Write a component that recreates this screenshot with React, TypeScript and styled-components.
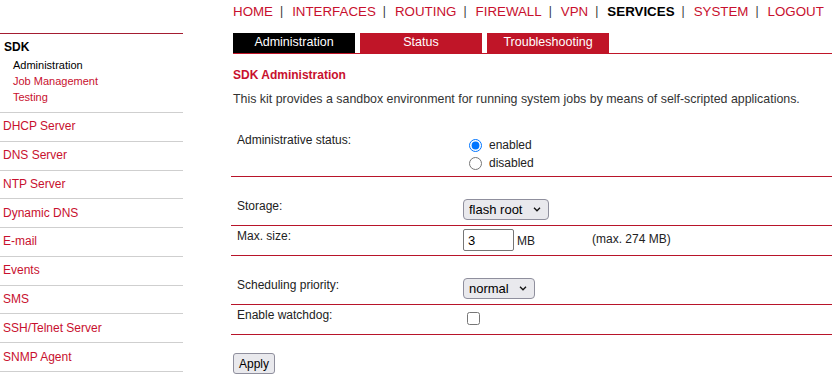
import React from 'react';
import styled, { createGlobalStyle } from 'styled-components';

const RED = '#c8102e';
const TAB_RED = '#c01528';
const LINE_RED = '#b8142a';

const GlobalStyle = createGlobalStyle`
  html, body { margin: 0; padding: 0; background: #fff; overflow: hidden; }
  body {
    font-family: "Liberation Sans", Arial, sans-serif;
    font-size: 12px;
    color: #222;
  }
`;

const Page = styled.div`
  display: grid;
  grid-template-columns: 183px 1fr;
  grid-template-rows: 33px auto;
  column-gap: 50px;
  width: 832px;
`;

const TopNav = styled.nav`
  grid-column: 2;
  grid-row: 1;
  display: flex;
  align-items: center;
  height: 22px;
  font-size: 13.33px;
`;

const NavLink = styled.a<{ $active?: boolean }>`
  color: ${p => (p.$active ? '#000' : RED)};
  font-weight: ${p => (p.$active ? 'bold' : 'normal')};
  text-decoration: none;
  white-space: nowrap;
`;

const NavSep = styled.span`
  color: #333;
  font-size: 12px;
  padding: 0 9px 0 7px;
`;

const Sidebar = styled.aside`
  grid-column: 1;
  grid-row: 2;
  border-top: 1px solid #a41d31;
`;

const Group = styled.div`
  padding: 6px 0 7px;
  border-bottom: 1px solid #cfcfcf;
`;

const GroupTitle = styled.div`
  font-weight: bold;
  font-size: 12px;
  line-height: 14px;
  padding-left: 4px;
  color: #000;
  margin-bottom: 3px;
`;

const SubLink = styled.a<{ $active?: boolean }>`
  display: block;
  font-size: 11px;
  line-height: 16px;
  padding-left: 13px;
  color: ${p => (p.$active ? '#000' : RED)};
  text-decoration: none;
`;

const SideItem = styled.a`
  display: flex;
  align-items: center;
  height: 28.78px;
  box-sizing: border-box;
  border-bottom: 1px solid #cfcfcf;
  padding: 0 0 1px 3px;
  font-size: 12px;
  color: ${RED};
  text-decoration: none;
`;

const Main = styled.main`
  grid-column: 2;
  grid-row: 2;
`;

const TabBar = styled.div`
  display: flex;
  gap: 5px;
  border-bottom: 1px solid ${TAB_RED};
`;

const Tab = styled.a<{ $active?: boolean }>`
  width: 122px;
  height: 20px;
  box-sizing: border-box;
  padding-bottom: 2px;
  display: flex;
  align-items: center;
  justify-content: center;
  background: ${p => (p.$active ? '#000' : TAB_RED)};
  color: #fff;
  font-size: 12.5px;
  text-decoration: none;
`;

const Heading = styled.h1`
  margin: 14px 0 0;
  font-size: 12px;
  line-height: 14px;
  font-weight: bold;
  color: ${RED};
`;

const Description = styled.p`
  margin: 10px 0 0;
  font-size: 12.4px;
  line-height: 14px;
  color: #333;
`;

const Form = styled.form`
  margin: 5px 0 0 -2px;
`;

const Row = styled.div<{ $spaced?: boolean }>`
  display: grid;
  grid-template-columns: 232px 1fr;
  border-bottom: 1px solid ${LINE_RED};
  padding: ${p => (p.$spaced ? '22px' : '3px')} 0 4px;
`;

const Label = styled.div`
  padding-left: 6px;
  font-size: 12px;
  line-height: 14px;
  color: #222;
`;

const Value = styled.div`
  display: flex;
  align-items: flex-start;
  min-height: 22px;
  font-size: 12px;
  color: #222;
`;

const RadioGroup = styled.div`
  display: flex;
  flex-direction: column;
  padding-top: 3px;
`;

const RadioOption = styled.label`
  display: flex;
  align-items: center;
  height: 18px;
  font-size: 12px;
  color: #222;
`;

const Radio = styled.input`
  margin: 0 7px 0 6px;
  width: 13px;
  height: 13px;
`;

const SelectWrap = styled.div`
  position: relative;
  display: inline-flex;
`;

const Select = styled.select`
  appearance: none;
  -webkit-appearance: none;
  height: 21px;
  box-sizing: border-box;
  padding: 0 25px 0 5px;
  font-family: "Liberation Sans", Arial, sans-serif;
  font-size: 13px;
  color: #000;
  background: #e9e9ed;
  border: 1px solid #8f8f9d;
  border-radius: 4px;
  outline: none;
`;

const Chevron = styled.svg`
  position: absolute;
  right: 8px;
  top: 8px;
  width: 8px;
  height: 5px;
  pointer-events: none;
`;

const SizeGrid = styled.div`
  display: grid;
  grid-template-columns: 129px auto;
  align-items: center;
  height: 22px;
`;

const SizeGroup = styled.div`
  display: flex;
  align-items: center;
`;

const TextInput = styled.input`
  width: 51px;
  height: 22px;
  box-sizing: border-box;
  margin: 0;
  padding: 0 4px;
  font-family: "Liberation Sans", Arial, sans-serif;
  font-size: 13px;
  color: #000;
  border: 1px solid #767676;
  border-radius: 2px;
`;

const Unit = styled.span`
  margin-left: 3px;
  font-size: 12px;
  padding-top: 2px;
`;

const Note = styled.span`
  font-size: 12px;
  padding-bottom: 2px;
`;

const Checkbox = styled.input`
  margin: 4px 0 0 4px;
  width: 13px;
  height: 13px;
`;

const ApplyButton = styled.button`
  margin: 18px 0 0 2px;
  height: 21px;
  padding: 0 5px;
  font-family: "Liberation Sans", Arial, sans-serif;
  font-size: 12px;
  color: #000;
  background: #e9e9ed;
  border: 1px solid #8f8f9d;
  border-radius: 3px;
`;

const navItems = ['HOME', 'INTERFACES', 'ROUTING', 'FIREWALL', 'VPN', 'SERVICES', 'SYSTEM', 'LOGOUT'];
const sideItems = ['DHCP Server', 'DNS Server', 'NTP Server', 'Dynamic DNS', 'E-mail', 'Events', 'SMS', 'SSH/Telnet Server', 'SNMP Agent'];

const ChevronIcon = () => (
  <Chevron viewBox="0 0 8 5">
    <polyline points="1,0.8 4,3.8 7,0.8" fill="none" stroke="#111" strokeWidth="1.3" />
  </Chevron>
);

export default function App() {
  return (
    <>
      <GlobalStyle />
      <Page>
        <TopNav>
          {navItems.map((item, i) => (
            <React.Fragment key={item}>
              <NavLink href="#" $active={item === 'SERVICES'}>{item}</NavLink>
              {i < navItems.length - 1 && <NavSep>|</NavSep>}
            </React.Fragment>
          ))}
        </TopNav>

        <Sidebar>
          <Group>
            <GroupTitle>SDK</GroupTitle>
            <SubLink href="#" $active>Administration</SubLink>
            <SubLink href="#">Job Management</SubLink>
            <SubLink href="#">Testing</SubLink>
          </Group>
          {sideItems.map(item => (
            <SideItem href="#" key={item}>{item}</SideItem>
          ))}
        </Sidebar>

        <Main>
          <TabBar>
            <Tab href="#" $active>Administration</Tab>
            <Tab href="#">Status</Tab>
            <Tab href="#">Troubleshooting</Tab>
          </TabBar>
          <Heading>SDK Administration</Heading>
          <Description>
            This kit provides a sandbox environment for running system jobs by means of self-scripted applications.
          </Description>

          <Form onSubmit={e => e.preventDefault()}>
            <Row $spaced>
              <Label>Administrative status:</Label>
              <Value>
                <RadioGroup>
                  <RadioOption>
                    <Radio type="radio" name="status" defaultChecked />
                    enabled
                  </RadioOption>
                  <RadioOption>
                    <Radio type="radio" name="status" />
                    disabled
                  </RadioOption>
                </RadioGroup>
              </Value>
            </Row>
            <Row $spaced>
              <Label>Storage:</Label>
              <Value>
                <SelectWrap>
                  <Select defaultValue="flash">
                    <option value="flash">flash root</option>
                  </Select>
                  <ChevronIcon />
                </SelectWrap>
              </Value>
            </Row>
            <Row>
              <Label>Max. size:</Label>
              <Value>
                <SizeGrid>
                  <SizeGroup>
                    <TextInput type="text" defaultValue="3" />
                    <Unit>MB</Unit>
                  </SizeGroup>
                  <Note>(max. 274 MB)</Note>
                </SizeGrid>
              </Value>
            </Row>
            <Row $spaced>
              <Label>Scheduling priority:</Label>
              <Value>
                <SelectWrap>
                  <Select defaultValue="normal">
                    <option value="normal">normal</option>
                  </Select>
                  <ChevronIcon />
                </SelectWrap>
              </Value>
            </Row>
            <Row>
              <Label>Enable watchdog:</Label>
              <Value>
                <Checkbox type="checkbox" />
              </Value>
            </Row>
            <ApplyButton type="submit">Apply</ApplyButton>
          </Form>
        </Main>
      </Page>
    </>
  );
}
